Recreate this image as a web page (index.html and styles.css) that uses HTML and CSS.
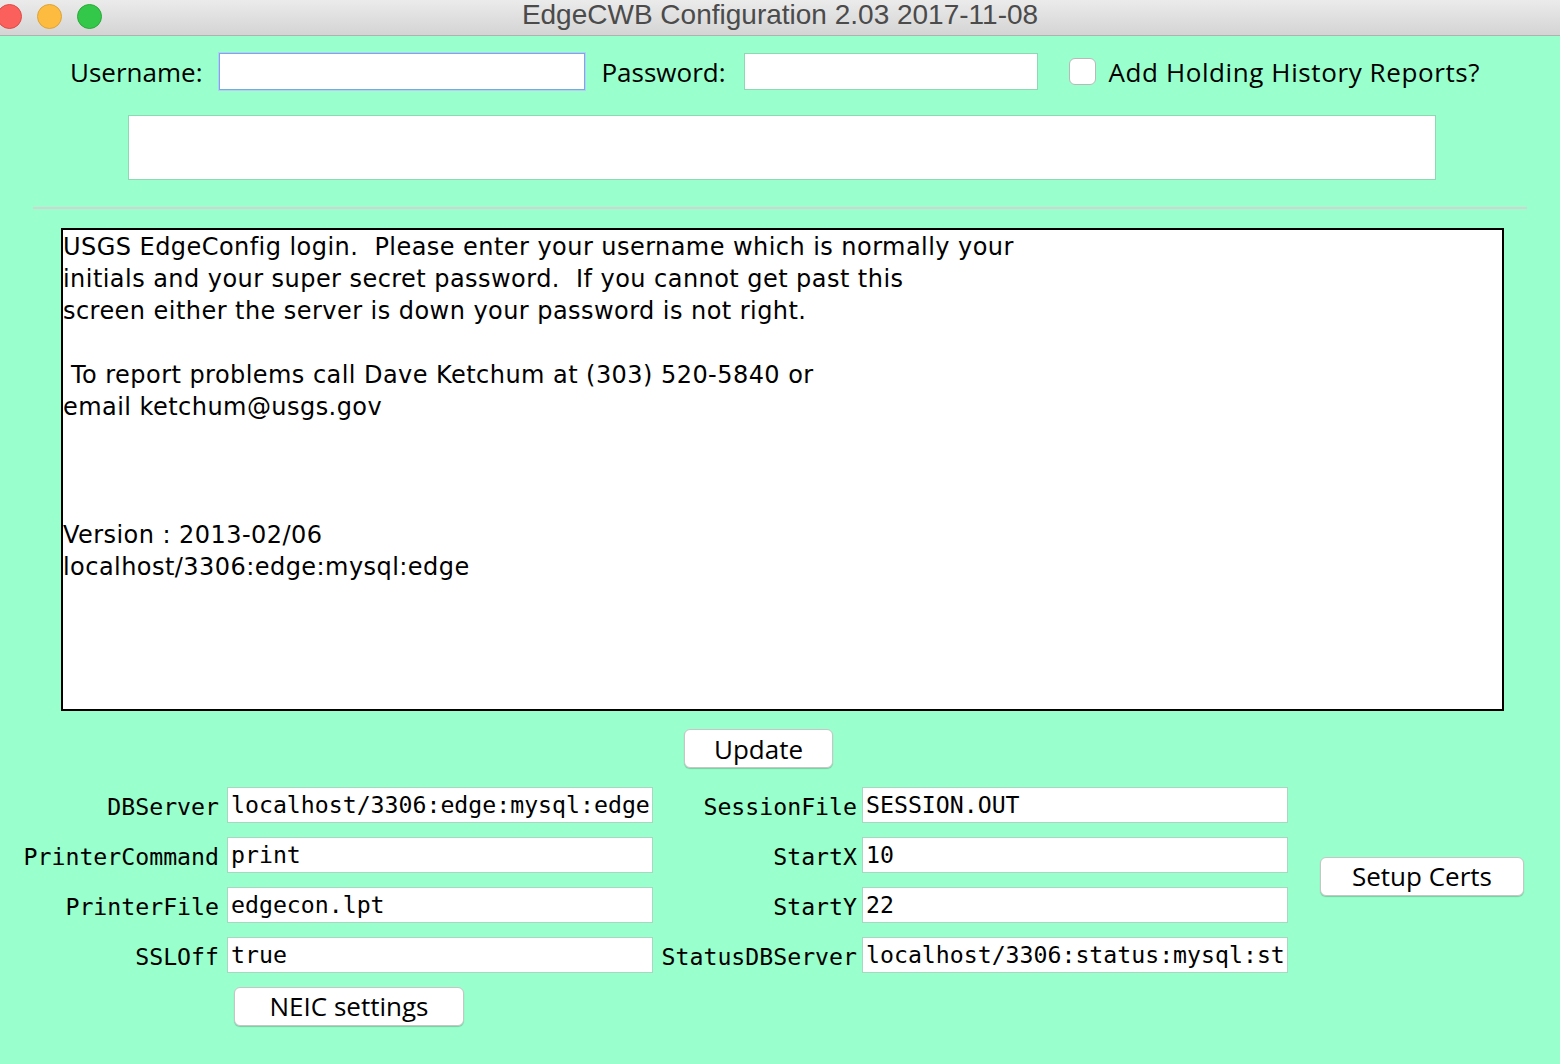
FILE: index.html
```html
<!DOCTYPE html>
<html>
<head>
<meta charset="utf-8">
<title>EdgeCWB Configuration 2.03 2017-11-08</title>
<link rel="stylesheet" href="styles.css">
</head>
<body>
<div class="window">
  <header class="titlebar">
    <div class="lights">
      <span class="light red"></span>
      <span class="light yellow"></span>
      <span class="light green"></span>
    </div>
    <div class="title">EdgeCWB Configuration 2.03 2017-11-08</div>
    <div></div>
  </header>

  <main class="content">
    <div class="login-row">
      <label class="ui-label">Username:</label>
      <div class="field user-field focused"></div>
      <label class="ui-label pw-label">Password:</label>
      <div class="field pw-field"></div>
      <span class="checkbox"></span>
      <span class="ui-label check-label">Add Holding History Reports?</span>
    </div>

    <div class="message-box"></div>

    <hr class="separator">

    <div class="info-box">USGS EdgeConfig login.  Please enter your username which is normally your
initials and your super secret password.  If you cannot get past this
screen either the server is down your password is not right.

 To report problems call Dave Ketchum at (303) 520-5840 or
email ketchum@usgs.gov



Version : 2013-02/06
localhost/3306:edge:mysql:edge</div>

    <div class="update-row">
      <button class="btn update-btn">Update</button>
    </div>

    <div class="settings">
      <span class="mlabel">DBServer</span>
      <div class="mfield">localhost/3306:edge:mysql:edge</div>
      <span class="mlabel rlabel">SessionFile</span>
      <div class="mfield">SESSION.OUT</div>
      <div class="certs-cell"><button class="btn certs-btn">Setup Certs</button></div>

      <span class="mlabel">PrinterCommand</span>
      <div class="mfield">print</div>
      <span class="mlabel rlabel">StartX</span>
      <div class="mfield">10</div>

      <span class="mlabel">PrinterFile</span>
      <div class="mfield">edgecon.lpt</div>
      <span class="mlabel rlabel">StartY</span>
      <div class="mfield">22</div>

      <span class="mlabel">SSLOff</span>
      <div class="mfield">true</div>
      <span class="mlabel rlabel">StatusDBServer</span>
      <div class="mfield">localhost/3306:status:mysql:st</div>

      <div class="neic-cell"><button class="btn neic-btn">NEIC settings</button></div>
    </div>
  </main>
</div>
</body>
</html>
```

FILE: styles.css
```css
* { box-sizing: border-box; }

html, body {
  margin: 0;
  padding: 0;
}

body {
  width: 1560px;
  height: 1064px;
  overflow: hidden;
  background: #99ffcc;
  font-family: "Open Sans", "DejaVu Sans", sans-serif;
  color: #000;
}

.window {
  display: flex;
  flex-direction: column;
  height: 100%;
}

.titlebar {
  height: 36px;
  flex: none;
  display: grid;
  grid-template-columns: 1fr auto 1fr;
  align-items: center;
  background: linear-gradient(#ebebeb, #d4d4d4);
  border-bottom: 1px solid #b1b1b1;
}

.lights {
  display: flex;
  gap: 15px;
  margin-left: -3px;
  margin-top: -2px;
  align-items: center;
}

.light {
  width: 25px;
  height: 25px;
  border-radius: 50%;
  display: block;
}
.light.red { background: #fc605c; border: 1px solid #de4a45; }
.light.yellow { background: #fdbc40; border: 1px solid #dea236; }
.light.green { background: #34c84a; border: 1px solid #27aa37; }

.title {
  font-family: "Liberation Sans", Arial, sans-serif;
  font-size: 28px;
  color: #4b4b4b;
  white-space: nowrap;
  margin-top: -6px;
}

.content {
  flex: 1;
  display: flex;
  flex-direction: column;
}

.login-row {
  display: flex;
  align-items: center;
  margin-top: 17px;
  padding-left: 70px;
  height: 37px;
}

.ui-label {
  font-size: 26px;
  white-space: nowrap;
}

.field {
  height: 37px;
  background: #fff;
  border: 1px solid #8fd8b4;
}
.field.focused {
  border: 1px solid #76a9e6;
  box-shadow: 0 0 0 1px #b3cff1;
}
.user-field { width: 366px; margin-left: 17px; }
.pw-label { margin-left: 16px; }
.pw-field { width: 294px; margin-left: 18px; }

.checkbox {
  width: 27px;
  height: 27px;
  margin-left: 31px;
  background: #fff;
  border: 1px solid #b9b9b9;
  border-radius: 6px;
  display: block;
}
.check-label { margin-left: 13px; letter-spacing: 0.6px; }

.message-box {
  margin-top: 25px;
  margin-left: 128px;
  width: 1308px;
  height: 65px;
  background: #fff;
  border: 1px solid #8fd8b4;
}

.separator {
  margin: 27px 0 0 33px;
  width: 1494px;
  height: 2px;
  border: none;
  background: #d3d3d3;
}

.info-box {
  margin-top: 19px;
  margin-left: 61px;
  width: 1443px;
  height: 483px;
  background: #fff;
  border: 2px solid #000;
  padding-top: 1px;
  white-space: pre;
  font-family: "DejaVu Sans", "Open Sans", sans-serif;
  font-size: 24px;
  letter-spacing: 0.45px;
  line-height: 32px;
}

.update-row {
  display: flex;
  margin-top: 18px;
  padding-left: 684px;
}

.btn {
  font-family: "Open Sans", "DejaVu Sans", sans-serif;
  font-size: 26px;
  color: #000;
  background: #fff;
  border: 1px solid #c6c6c6;
  border-radius: 6px;
  box-shadow: 0 1px 1px rgba(0,0,0,0.2);
  height: 39px;
  padding: 0;
  line-height: 1;
}

.update-btn { width: 149px; }

.settings {
  display: grid;
  grid-template-columns: 219px 434px 201px 434px 1fr;
  grid-auto-rows: 36px;
  row-gap: 14px;
  margin-top: 19px;
  align-items: center;
}

.mlabel {
  font-family: "DejaVu Sans Mono", "Liberation Mono", monospace;
  font-size: 23.2px;
  text-align: right;
  white-space: nowrap;
  padding-top: 2px;
}
.rlabel { margin-right: -3px; }

.mfield {
  height: 36px;
  background: #fff;
  border: 1px solid #a8d9c0;
  font-family: "DejaVu Sans Mono", "Liberation Mono", monospace;
  font-size: 23.2px;
  line-height: 34px;
  padding-left: 3px;
  white-space: nowrap;
  overflow: hidden;
  margin-left: 8px;
}

.certs-cell {
  grid-column: 5;
  grid-row: 1 / span 4;
  align-self: center;
  padding-left: 32px;
  margin-top: -8px;
}
.certs-btn { width: 204px; }

.neic-cell {
  grid-column: 2;
  grid-row: 5;
  height: 39px;
  margin-top: 2px;
}
.neic-btn { width: 230px; margin-left: 15px; }
```
